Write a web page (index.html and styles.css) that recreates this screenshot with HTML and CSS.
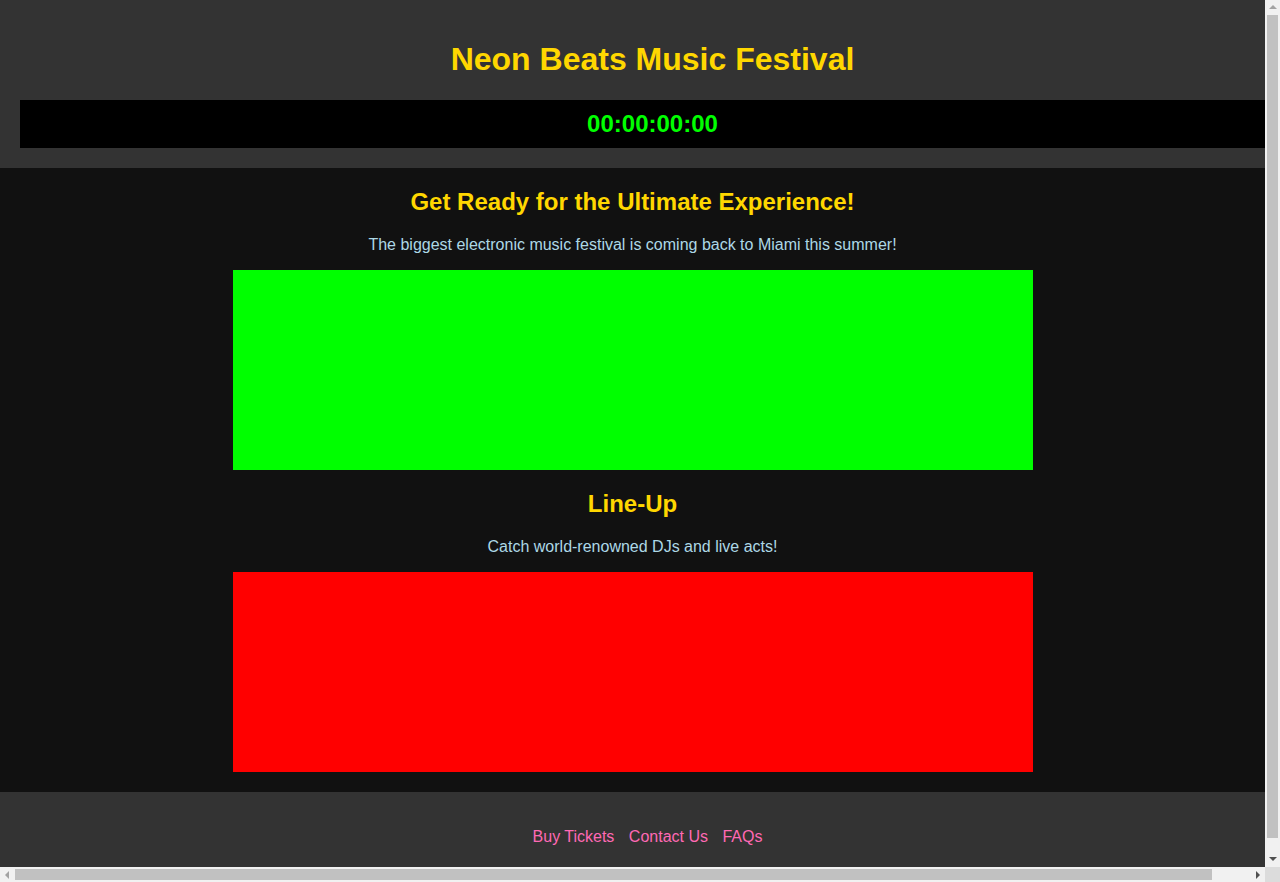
FILE: index.html
```html
<!DOCTYPE html>
<html lang="en">
<head>
<meta charset="utf-8">
<title>Neon Beats Music Festival</title>
<link rel="stylesheet" href="styles.css">
</head>
<body>
<div class="page">
  <header class="site-header">
    <h1 class="title">Neon Beats Music Festival</h1>
    <div class="countdown">00:00:00:00</div>
  </header>
  <main class="content">
    <section class="block">
      <h2 class="block-title first">Get Ready for the Ultimate Experience!</h2>
      <p class="block-text">The biggest electronic music festival is coming back to Miami this summer!</p>
      <div class="banner banner-green"></div>
    </section>
    <section class="block">
      <h2 class="block-title">Line-Up</h2>
      <p class="block-text">Catch world-renowned DJs and live acts!</p>
      <div class="banner banner-red"></div>
    </section>
  </main>
  <footer class="site-footer">
    <p class="links"><a href="#" class="link">Buy Tickets</a> <a href="#" class="link">Contact Us</a> <a href="#" class="link">FAQs</a></p>
  </footer>
</div>
<div class="vscroll" aria-hidden="true">
  <span class="arrow arrow-up"></span>
  <span class="vthumb"></span>
  <span class="arrow arrow-down"></span>
</div>
<div class="hscroll" aria-hidden="true">
  <span class="arrow arrow-left"></span>
  <span class="hthumb"></span>
  <span class="arrow arrow-right"></span>
</div>
<div class="scroll-corner" aria-hidden="true"></div>
</body>
</html>
```

FILE: styles.css
```css
html, body {
  margin: 0;
  padding: 0;
}
html {
  overflow: hidden;
}
body {
  font-family: "Liberation Sans", Arial, sans-serif;
  background: #111111;
  color: #add8e6;
  width: 1280px;
  height: 882px;
  overflow: hidden;
}
.page {
  width: 1265px;
}
.site-header {
  background: #333333;
  padding: 20px;
  width: 100%;
  text-align: center;
}
.title {
  margin: 21.44px 0;
  font-size: 32px;
  font-weight: bold;
  color: #ffd700;
}
.countdown {
  background: #000000;
  color: #00ff00;
  font-size: 24px;
  font-weight: bold;
  padding: 10px 0;
}
.content {
  background: #111111;
  padding: 20px;
  text-align: center;
}
.block {
  width: 800px;
  margin: 0 auto;
}
.block-title {
  margin: 19.92px 0;
  font-size: 24px;
  font-weight: bold;
  color: #ffd700;
}
.block-title.first {
  margin-top: 0;
}
.block-text {
  margin: 16px 0;
  font-size: 16px;
  color: #add8e6;
}
.banner {
  height: 200px;
}
.banner-green {
  background: #00ff00;
}
.banner-red {
  background: #ff0000;
}
.site-footer {
  background: #333333;
  padding: 20px;
  width: 100%;
  text-align: center;
}
.links {
  margin: 16px 0;
}
.link {
  color: #ff69b4;
  text-decoration: none;
  margin-right: 10px;
}

/* Fake classic scrollbars */
.vscroll {
  position: fixed;
  top: 0;
  left: 1265px;
  width: 15px;
  height: 867px;
  background: #f1f1f1;
}
.vthumb {
  position: absolute;
  left: 2px;
  top: 15px;
  width: 11px;
  height: 823px;
  background: #c1c1c1;
}
.hscroll {
  position: fixed;
  left: 0;
  top: 867px;
  width: 1265px;
  height: 15px;
  background: #f1f1f1;
}
.hthumb {
  position: absolute;
  top: 2px;
  left: 15px;
  width: 1197px;
  height: 11px;
  background: #c1c1c1;
}
.scroll-corner {
  position: fixed;
  left: 1265px;
  top: 867px;
  width: 15px;
  height: 15px;
  background: #dcdcdc;
}
.arrow {
  position: absolute;
  width: 0;
  height: 0;
  border-style: solid;
}
.arrow-up {
  left: 4px;
  top: 5px;
  border-width: 0 4px 4px 4px;
  border-color: transparent transparent #a3a3a3 transparent;
}
.arrow-down {
  left: 4px;
  top: 857px;
  border-width: 4px 4px 0 4px;
  border-color: #505050 transparent transparent transparent;
}
.arrow-left {
  left: 5px;
  top: 4px;
  border-width: 4px 4px 4px 0;
  border-color: transparent #a3a3a3 transparent transparent;
}
.arrow-right {
  left: 1256px;
  top: 4px;
  border-width: 4px 0 4px 4px;
  border-color: transparent transparent transparent #505050;
}
```
